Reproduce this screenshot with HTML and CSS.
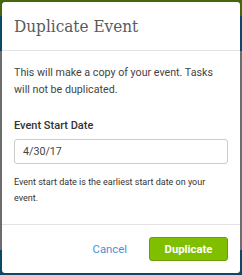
FILE: index.html
```html
<!DOCTYPE html>
<html>
<head>
<meta charset="utf-8">
<link rel="stylesheet" href="styles.css">
</head>
<body>
<div class="modal">
  <div class="modal-header">
    <h1 class="modal-title">Duplicate Event</h1>
  </div>
  <div class="modal-body">
    <p class="intro">This will make a copy of your event. Tasks will not be duplicated.</p>
    <label class="field-label" for="start">Event Start Date</label>
    <input class="field-input" id="start" type="text" value="4/30/17">
    <p class="help">Event start date is the earliest start date on your event.</p>
  </div>
  <div class="modal-footer">
    <button class="btn-link" type="button">Cancel</button>
    <button class="btn-primary" type="button">Duplicate</button>
  </div>
</div>
</body>
</html>
```
FILE: styles.css
```css
html, body {
  margin: 0;
  padding: 0;
}
body {
  width: 242px;
  height: 275px;
  overflow: hidden;
  font-family: Roboto, "Liberation Sans", sans-serif;
  background: linear-gradient(to bottom,
    #45660a 0, #45660a 16px,
    #0d4866 16px, #0d4866 51px,
    #6c6c6c 51px, #6c6c6c 250px,
    #0d4866 250px, #0d4866 275px);
  padding: 2px 2px 0 2px;
  box-sizing: border-box;
}
.modal {
  width: 238px;
  height: 271px;
  background: #fff;
  border-radius: 3px;
  display: flex;
  flex-direction: column;
  box-sizing: border-box;
}
.modal-header {
  height: 49px;
  border-bottom: 1px solid #e3e3e3;
  display: flex;
  align-items: center;
  padding: 0 12px;
  box-sizing: border-box;
}
.modal-title {
  margin: 0;
  font-family: "DejaVu Serif Condensed", "DejaVu Serif", serif;
  font-weight: 300;
  font-size: 17px;
  color: #5a5a5a;
}
.modal-body {
  padding: 13px 12px 0 12px;
  flex: 1;
  display: flex;
  flex-direction: column;
}
.intro {
  margin: 0;
  font-size: 10.7px;
  line-height: 17px;
  color: #444;
}
.field-label {
  margin-top: 20px;
  font-size: 11px;
  font-weight: 500;
  color: #333;
  line-height: 16px;
}
.field-input {
  margin-top: 5px;
  height: 25px;
  width: 214px;
  box-sizing: border-box;
  border: 1px solid #ccc;
  border-radius: 3px;
  padding: 0 8px;
  font-family: Roboto, "Liberation Sans", sans-serif;
  font-size: 10.7px;
  color: #444;
}
.help {
  margin: 10px 0 0 0;
  font-size: 9px;
  line-height: 16px;
  color: #333;
}
.modal-footer {
  height: 49px;
  border-top: 1px solid #e3e3e3;
  display: flex;
  align-items: center;
  justify-content: flex-end;
  padding: 0 12px 0 0;
  box-sizing: border-box;
  gap: 22px;
}
.btn-link {
  background: none;
  border: 0;
  padding: 0;
  font-family: Roboto, "Liberation Sans", sans-serif;
  font-size: 11.3px;
  color: #4a90d6;
}
.btn-primary {
  width: 79px;
  height: 24px;
  background: #7fbf00;
  border: 1px solid #6a9d08;
  border-radius: 3px;
  color: #fff;
  font-family: Roboto, "Liberation Sans", sans-serif;
  font-weight: 700;
  font-size: 11.3px;
  padding: 0;
}
```
